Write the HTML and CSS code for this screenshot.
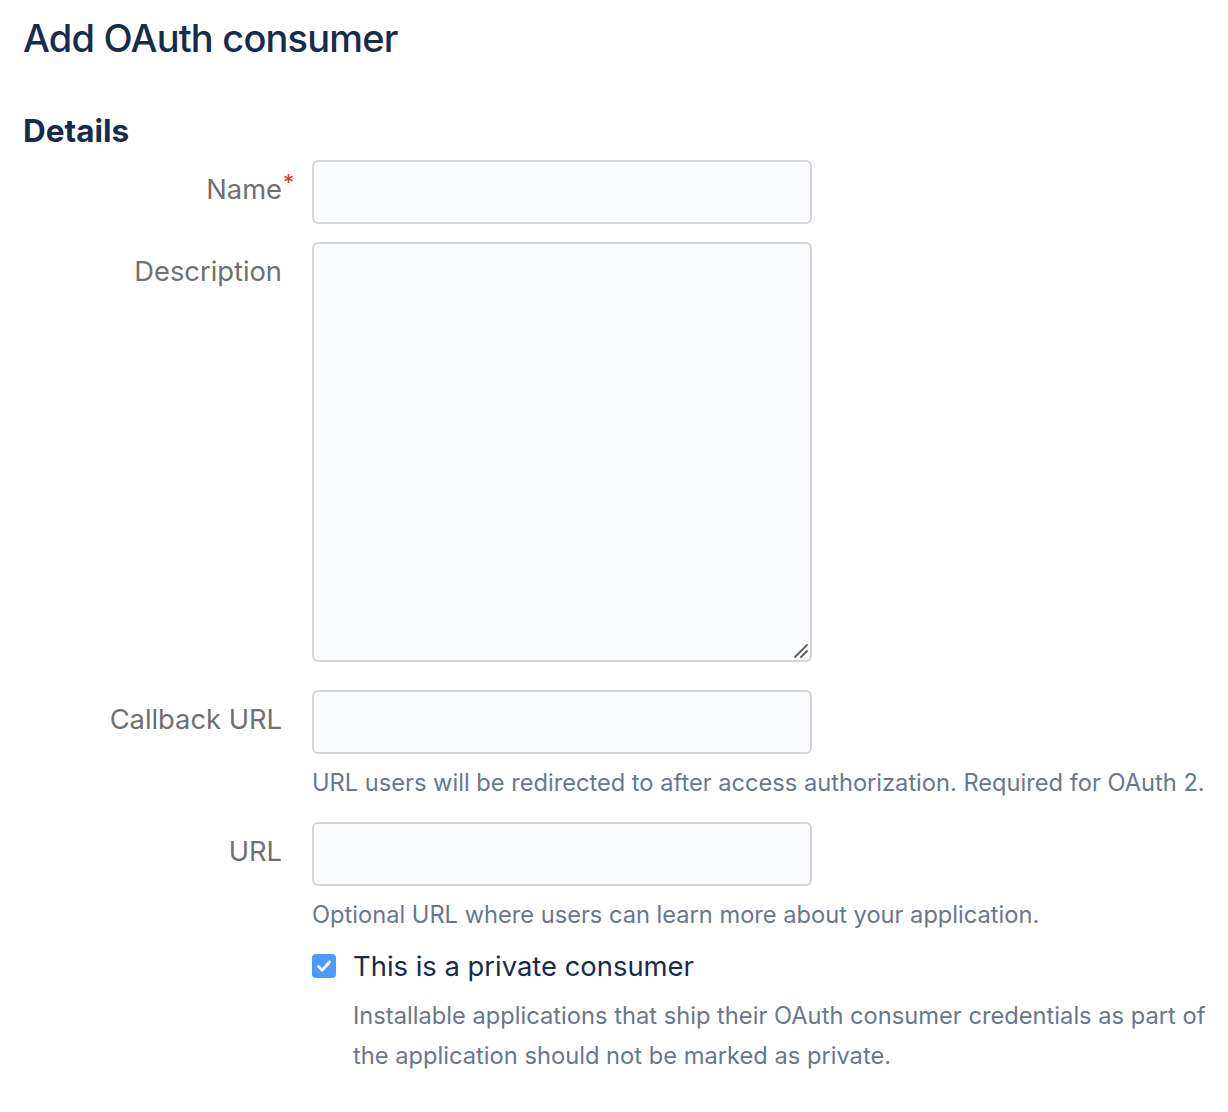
FILE: index.html
```html
<!DOCTYPE html>
<html lang="en">
<head>
<meta charset="utf-8">
<title>Add OAuth consumer</title>
<link rel="stylesheet" href="styles.css">
</head>
<body>
<div class="page">
  <h1 class="page-title">Add OAuth consumer</h1>
  <h2 class="section-title">Details</h2>
  <form class="form">
    <div class="field-group g-name">
      <label class="field-label"><span class="label-text">Name<span class="req">*</span></span></label>
      <div class="field"><input class="text-input" type="text"></div>
    </div>
    <div class="field-group g-desc">
      <label class="field-label"><span class="label-text">Description</span></label>
      <div class="field">
        <div class="textarea-wrap">
          <textarea class="textarea"></textarea>
          <svg class="grip" width="14" height="14" viewBox="0 0 14 14" aria-hidden="true">
            <line x1="1" y1="13" x2="13" y2="1" stroke="#5E5E5E" stroke-width="1.8" stroke-linecap="round"/>
            <line x1="7" y1="13" x2="13" y2="7" stroke="#5E5E5E" stroke-width="1.8" stroke-linecap="round"/>
          </svg>
        </div>
      </div>
    </div>
    <div class="field-group g-callback">
      <label class="field-label"><span class="label-text">Callback URL</span></label>
      <div class="field">
        <input class="text-input" type="text">
        <div class="help">URL users will be redirected to after access authorization. Required for OAuth 2.</div>
      </div>
    </div>
    <div class="field-group g-url">
      <label class="field-label"><span class="label-text">URL</span></label>
      <div class="field">
        <input class="text-input" type="text">
        <div class="help">Optional URL where users can learn more about your application.</div>
      </div>
    </div>
    <div class="field-group g-check">
      <div class="field-label"></div>
      <div class="field">
        <label class="checkbox-row">
          <svg class="checkbox" width="24" height="24" viewBox="0 0 24 24" aria-hidden="true">
            <rect x="0" y="0" width="24" height="24" rx="4" fill="#4C9AFF"/>
            <polyline points="6.5,12.5 10.2,16.2 17.5,8" fill="none" stroke="#fff" stroke-width="2.8" stroke-linecap="round" stroke-linejoin="round"/>
          </svg>
          <span class="checkbox-label">This is a private consumer</span>
        </label>
        <div class="check-help">Installable applications that ship their OAuth consumer credentials as part of the application should not be marked as private.</div>
      </div>
    </div>
  </form>
</div>
</body>
</html>
```

FILE: styles.css
```css
html, body {
  margin: 0;
  padding: 0;
  background: #fff;
}

body {
  font-family: Inter, "Liberation Sans", Arial, sans-serif;
  color: #172B4D;
}

.page {
  padding: 14px 0 0 23px;
}

.page-title {
  margin: 0;
  font-size: 38px;
  line-height: 48px;
  font-weight: 500;
  color: #172B4D;
  letter-spacing: -0.8px;
}

.section-title {
  margin: 49px 0 0;
  font-size: 31.5px;
  line-height: 40px;
  font-weight: 700;
  color: #172B4D;
}

.form {
  margin-top: 9px;
}

.field-group {
  display: flex;
  align-items: flex-start;
}

.g-desc { margin-top: 18px; }
.g-callback { margin-top: 28px; }
.g-url { margin-top: 19px; }
.g-check { margin-top: 11px; }

.field-label {
  flex: 0 0 259px;
  margin-right: 30px;
  text-align: right;
  font-size: 27.3px;
  line-height: 40px;
  padding-top: 10px;
  color: #707070;
}

.label-text {
  position: relative;
}

.req {
  position: absolute;
  left: 100%;
  top: -2px;
  margin-left: 1px;
  font-size: 22px;
  line-height: 1;
  color: #DE350B;
}

.field {
  flex: 1 1 auto;
  min-width: 0;
}

.text-input,
.textarea {
  display: block;
  box-sizing: border-box;
  width: 500px;
  margin: 0;
  border: 2px solid #D4D6D9;
  border-radius: 6px;
  background: #FAFBFC;
  font-family: inherit;
  font-size: 27px;
  outline: none;
}

.text-input {
  height: 64px;
  padding: 0 12px;
}

.textarea-wrap {
  position: relative;
  width: 500px;
  height: 420px;
}

.textarea {
  height: 420px;
  padding: 8px 12px;
  resize: none;
}

.grip {
  position: absolute;
  right: 4px;
  bottom: 4px;
  pointer-events: none;
}

.help {
  margin-top: 9px;
  font-size: 23.65px;
  line-height: 40px;
  color: #6B778C;
  white-space: nowrap;
}

.checkbox-row {
  display: flex;
  align-items: center;
  height: 40px;
}

.checkbox {
  flex: 0 0 24px;
  margin-right: 17px;
}

.checkbox-label {
  font-size: 27.4px;
  line-height: 40px;
  color: #172B4D;
}

.check-help {
  margin: 10px 0 0 41px;
  max-width: 870px;
  font-size: 23.7px;
  line-height: 40px;
  color: #6B778C;
}
```
